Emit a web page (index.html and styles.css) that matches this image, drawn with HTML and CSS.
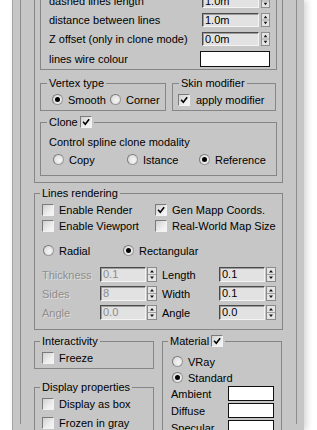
FILE: index.html
```html
<!DOCTYPE html>
<html>
<head>
<meta charset="utf-8">
<link rel="stylesheet" href="styles.css">
</head>
<body>
<div class="panel">
  <div class="rollout">
    <div class="open-group big">
      <div class="open-group params">
        <div class="prow"><span class="plabel">dashed lines length</span><span class="spinner"><span class="field">1.0m</span><svg class="spin" viewBox="0 0 10 15" preserveAspectRatio="none"><rect x=".5" y=".5" width="9" height="14" fill="#e4e4e4" stroke="#8a8a8a"/><path d="M1 7.5h8" stroke="#a0a0a0"/><path d="M3 5.5h4L5 3z M3 9.5h4L5 12z" fill="#111"/></svg></span></div>
        <div class="prow"><span class="plabel">distance between lines</span><span class="spinner"><span class="field">1.0m</span><svg class="spin" viewBox="0 0 10 15" preserveAspectRatio="none"><rect x=".5" y=".5" width="9" height="14" fill="#e4e4e4" stroke="#8a8a8a"/><path d="M1 7.5h8" stroke="#a0a0a0"/><path d="M3 5.5h4L5 3z M3 9.5h4L5 12z" fill="#111"/></svg></span></div>
        <div class="prow"><span class="plabel">Z offset (only in clone mode)</span><span class="spinner"><span class="field">0.0m</span><svg class="spin" viewBox="0 0 10 15" preserveAspectRatio="none"><rect x=".5" y=".5" width="9" height="14" fill="#e4e4e4" stroke="#8a8a8a"/><path d="M1 7.5h8" stroke="#a0a0a0"/><path d="M3 5.5h4L5 3z M3 9.5h4L5 12z" fill="#111"/></svg></span></div>
        <div class="prow tall"><span class="plabel">lines wire colour</span><span class="swatch wide"></span></div>
      </div>

      <div class="pair">
        <fieldset class="box vertex">
          <legend>Vertex type</legend>
          <div class="vertex-body">
            <span class="opt smooth"><span class="rb on"></span>Smooth</span>
            <span class="opt"><span class="rb"></span>Corner</span>
          </div>
        </fieldset>
        <fieldset class="box skin">
          <legend>Skin modifier</legend>
          <div class="skin-body">
            <span class="opt"><span class="cb"><svg viewBox="0 0 12 12"><path d="M2.5 5.8l2.6 2.8L9.8 2.6" fill="none" stroke="#000" stroke-width="1.9"/></svg></span>apply modifier</span>
          </div>
        </fieldset>
      </div>

      <fieldset class="box clone">
        <legend><span class="leg">Clone<span class="cb"><svg viewBox="0 0 12 12"><path d="M2.5 5.8l2.6 2.8L9.8 2.6" fill="none" stroke="#000" stroke-width="1.9"/></svg></span></span></legend>
        <div class="clone-body">
          <div class="line">Control spline clone modality</div>
          <div class="clone-opts">
            <span class="opt copy"><span class="rb"></span>Copy</span>
            <span class="opt istance"><span class="rb"></span>Istance</span>
            <span class="opt"><span class="rb on"></span>Reference</span>
          </div>
        </div>
      </fieldset>
    </div>

    <fieldset class="box lines">
      <legend>Lines rendering</legend>
      <div class="lines-body">
        <div class="checks">
          <span class="opt"><span class="cb"></span>Enable Render</span>
          <span class="opt"><span class="cb"><svg viewBox="0 0 12 12"><path d="M2.5 5.8l2.6 2.8L9.8 2.6" fill="none" stroke="#000" stroke-width="1.9"/></svg></span>Gen Mapp Coords.</span>
          <span class="opt"><span class="cb"></span>Enable Viewport</span>
          <span class="opt"><span class="cb"></span>Real-World Map Size</span>
        </div>
        <div class="shape-opts">
          <span class="opt radial"><span class="rb"></span>Radial</span>
          <span class="opt"><span class="rb on"></span>Rectangular</span>
        </div>
        <div class="lparams">
          <div class="lrow">
            <span class="llabel off">Thickness</span>
            <span class="spinner"><span class="field off">0.1</span><svg class="spin" viewBox="0 0 10 15" preserveAspectRatio="none"><rect x=".5" y=".5" width="9" height="14" fill="#e4e4e4" stroke="#8a8a8a"/><path d="M1 7.5h8" stroke="#a0a0a0"/><path d="M3 5.5h4L5 3z M3 9.5h4L5 12z" fill="#111"/></svg></span>
            <span class="llabel">Length</span>
            <span class="spinner"><span class="field">0.1</span><svg class="spin" viewBox="0 0 10 15" preserveAspectRatio="none"><rect x=".5" y=".5" width="9" height="14" fill="#e4e4e4" stroke="#8a8a8a"/><path d="M1 7.5h8" stroke="#a0a0a0"/><path d="M3 5.5h4L5 3z M3 9.5h4L5 12z" fill="#111"/></svg></span>
          </div>
          <div class="lrow">
            <span class="llabel off">Sides</span>
            <span class="spinner"><span class="field off">8</span><svg class="spin" viewBox="0 0 10 15" preserveAspectRatio="none"><rect x=".5" y=".5" width="9" height="14" fill="#e4e4e4" stroke="#8a8a8a"/><path d="M1 7.5h8" stroke="#a0a0a0"/><path d="M3 5.5h4L5 3z M3 9.5h4L5 12z" fill="#111"/></svg></span>
            <span class="llabel">Width</span>
            <span class="spinner"><span class="field">0.1</span><svg class="spin" viewBox="0 0 10 15" preserveAspectRatio="none"><rect x=".5" y=".5" width="9" height="14" fill="#e4e4e4" stroke="#8a8a8a"/><path d="M1 7.5h8" stroke="#a0a0a0"/><path d="M3 5.5h4L5 3z M3 9.5h4L5 12z" fill="#111"/></svg></span>
          </div>
          <div class="lrow">
            <span class="llabel off">Angle</span>
            <span class="spinner"><span class="field off">0.0</span><svg class="spin" viewBox="0 0 10 15" preserveAspectRatio="none"><rect x=".5" y=".5" width="9" height="14" fill="#e4e4e4" stroke="#8a8a8a"/><path d="M1 7.5h8" stroke="#a0a0a0"/><path d="M3 5.5h4L5 3z M3 9.5h4L5 12z" fill="#111"/></svg></span>
            <span class="llabel">Angle</span>
            <span class="spinner"><span class="field">0.0</span><svg class="spin" viewBox="0 0 10 15" preserveAspectRatio="none"><rect x=".5" y=".5" width="9" height="14" fill="#e4e4e4" stroke="#8a8a8a"/><path d="M1 7.5h8" stroke="#a0a0a0"/><path d="M3 5.5h4L5 3z M3 9.5h4L5 12z" fill="#111"/></svg></span>
          </div>
        </div>
      </div>
    </fieldset>

    <div class="bottom">
      <div class="col">
        <fieldset class="box interact">
          <legend>Interactivity</legend>
          <div class="interact-body">
            <span class="opt"><span class="cb"></span>Freeze</span>
          </div>
        </fieldset>
        <fieldset class="box display">
          <legend>Display properties</legend>
          <div class="display-body">
            <span class="opt"><span class="cb"></span>Display as box</span>
            <span class="opt"><span class="cb"></span>Frozen in gray</span>
          </div>
        </fieldset>
      </div>
      <fieldset class="box material">
        <legend><span class="leg">Material<span class="cb"><svg viewBox="0 0 12 12"><path d="M2.5 5.8l2.6 2.8L9.8 2.6" fill="none" stroke="#000" stroke-width="1.9"/></svg></span></span></legend>
        <div class="material-body">
          <span class="opt"><span class="rb"></span>VRay</span>
          <span class="opt"><span class="rb on"></span>Standard</span>
          <div class="mrow"><span class="mlabel">Ambient</span><span class="swatch"></span></div>
          <div class="mrow"><span class="mlabel">Diffuse</span><span class="swatch"></span></div>
          <div class="mrow"><span class="mlabel">Specular</span><span class="swatch"></span></div>
        </div>
      </fieldset>
    </div>
  </div>
</div>
</body>
</html>
```
FILE: styles.css
```css
html, body {
  margin: 0;
  background: #ffffff;
}
body {
  font-family: "Liberation Sans", Arial, sans-serif;
  font-size: 11px;
  color: #000;
}
.panel {
  margin-left: 12px;
  width: 292px;
  height: 430px;
  overflow: hidden;
  box-sizing: border-box;
  background: #c6c6c6;
  border-left: 1px solid #a4a4a4;
  padding-left: 7px;
  box-shadow: 3px 0 6px rgba(0, 0, 0, 0.16);
}
.rollout {
  width: 277px;
  height: 100%;
  box-sizing: border-box;
  border-left: 1px solid #8c8c8c;
  border-right: 1px solid #8c8c8c;
  padding: 0 13px;
}
.open-group {
  border: 1px solid #868686;
  border-top: none;
}
.big {
  padding: 0 5px 6px 5px;
}
.params {
  margin-top: -6px;
  padding: 0 6px 2px 8px;
}
.prow {
  display: flex;
  align-items: center;
  height: 14px;
}
.prow + .prow {
  margin-top: 5px;
}
.prow.tall {
  height: 16px;
}
.plabel {
  flex: 1;
  white-space: nowrap;
}
.spinner {
  display: flex;
  align-items: stretch;
  gap: 2px;
  height: 14px;
}
.field {
  width: 57px;
  box-sizing: border-box;
  background: #e2e2e2;
  border-top: 1px solid #4a4a4a;
  border-left: 1px solid #4a4a4a;
  border-right: 1px solid #f4f4f4;
  border-bottom: 1px solid #f4f4f4;
  box-shadow: inset 1px 1px 0 #9c9c9c;
  padding-left: 2px;
  line-height: 12px;
  font-size: 11px;
}
.field.off {
  color: #8c8c8c;
}
.spin {
  width: 9px;
  height: 14px;
  display: block;
}
.swatch {
  display: block;
  box-sizing: border-box;
  width: 46px;
  height: 15px;
  background: #fff;
  border: 1px solid #111;
}
.swatch.wide {
  width: 70px;
  height: 16px;
}

/* group boxes */
.box {
  margin: 0;
  padding: 0;
  min-width: 0;
  box-sizing: border-box;
  border: 1px solid #868686;
}
.box legend {
  margin-left: 6px;
  padding: 0 2px;
  height: 12px;
  line-height: 12px;
  white-space: nowrap;
}
.lines legend,
.interact legend,
.display legend,
.material legend {
  margin-left: 5px;
}
.leg {
  display: inline-flex;
  align-items: center;
  gap: 2px;
}

.opt {
  display: flex;
  align-items: center;
  height: 13px;
  white-space: nowrap;
}
.rb {
  width: 11px;
  height: 11px;
  box-sizing: border-box;
  border-radius: 50%;
  background: radial-gradient(circle at 60% 60%, #f6f6f6 0%, #e2e2e2 60%, #cfcfcf 100%);
  border: 1px solid #9a9a9a;
  border-top-color: #7c7c7c;
  border-left-color: #7c7c7c;
  margin-right: 5px;
  display: flex;
  align-items: center;
  justify-content: center;
  flex: none;
}
.rb.on::after {
  content: "";
  width: 5px;
  height: 5px;
  border-radius: 50%;
  background: #000;
}
.cb {
  width: 12px;
  height: 12px;
  box-sizing: border-box;
  background: linear-gradient(135deg, #d0d0d0 0%, #ececec 60%, #f6f6f6 100%);
  border-top: 1px solid #7a7a7a;
  border-left: 1px solid #7a7a7a;
  border-right: 1px solid #f2f2f2;
  border-bottom: 1px solid #f2f2f2;
  margin-right: 5px;
  flex: none;
  display: block;
}
.cb svg {
  display: block;
  width: 10px;
  height: 10px;
}
.leg .cb {
  margin-right: 0;
}

/* vertex / skin */
.pair {
  display: flex;
  gap: 6px;
  margin-top: 7px;
}
.vertex {
  width: 126px;
}
.skin {
  width: 104px;
}
.vertex-body {
  display: flex;
  padding: 4px 0 4px 11px;
}
.smooth {
  width: 58px;
}
.skin-body {
  padding: 4px 0 4px 5px;
}
.skin-body .cb {
  margin-right: 6px;
}

/* clone */
.clone {
  margin-top: 5px;
}
.clone-body {
  padding: 8px 0 9px 8px;
}
.line {
  height: 13px;
  line-height: 13px;
}
.clone-opts {
  display: flex;
  margin-top: 4px;
  margin-left: 4px;
}
.copy {
  width: 74px;
}
.istance {
  width: 72px;
}

/* lines rendering */
.lines {
  margin-top: 4px;
}
.lines-body {
  padding: 4px 0 9px 7px;
}
.checks {
  display: grid;
  grid-template-columns: 113px auto;
  row-gap: 2px;
}
.checks .opt {
  height: 14px;
}
.shape-opts {
  display: flex;
  margin-top: 11px;
  padding-left: 1px;
}
.radial {
  width: 80px;
}
.lparams {
  margin-top: 10px;
}
.lrow {
  display: flex;
  align-items: center;
  height: 15px;
}
.lrow + .lrow {
  margin-top: 4px;
}
.llabel {
  width: 58px;
}
.llabel + .spinner + .llabel {
  width: 57px;
  margin-left: 5px;
}
.lrow .spinner {
  height: 15px;
  gap: 1px;
}
.lrow .field {
  width: 46px;
  line-height: 13px;
}
.lrow .spin {
  width: 10px;
  height: 15px;
}
.off {
  color: #8e8e8e;
  text-shadow: 1px 1px 0 #dedede;
}

/* bottom */
.bottom {
  display: flex;
  gap: 8px;
  margin-top: 5px;
  align-items: flex-start;
}
.col {
  width: 120px;
  display: flex;
  flex-direction: column;
  gap: 12px;
}
.interact-body {
  padding: 4px 0 3px 7px;
}
.interact-body .opt,
.display-body .opt {
  height: 14px;
}
.display-body {
  padding: 4px 0 20px 7px;
  display: flex;
  flex-direction: column;
  gap: 5px;
}
.material {
  width: 120px;
}
.material-body {
  padding: 8px 0 20px 8px;
  display: flex;
  flex-direction: column;
  gap: 3px;
}
.material-body .rb {
  margin-left: 1px;
}
.mrow {
  display: flex;
  align-items: center;
  height: 15px;
}
.mrow + .mrow {
  margin-top: -1px;
}
.material-body .opt + .mrow {
  margin-top: -1px;
}
.mlabel {
  width: 57px;
}
```
